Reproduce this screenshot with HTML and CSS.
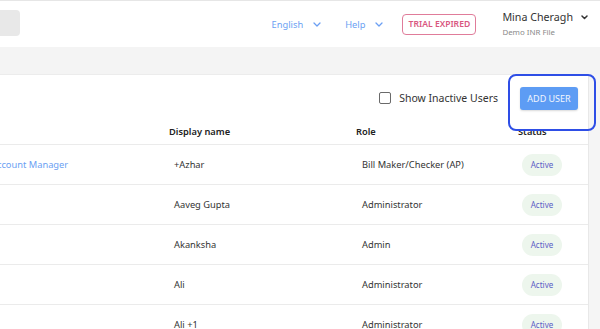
FILE: index.html
```
<!DOCTYPE html>
<html lang="en">
<head>
<meta charset="utf-8">
<title>Users</title>
<link rel="stylesheet" href="styles.css">
</head>
<body>
<header class="topbar">
  <div class="logo-box"></div>
  <nav class="top-nav">
    <a class="nav-link" href="#">English
      <svg class="chev" width="8" height="5" viewBox="0 0 8 5"><polyline points="1,1 4,4 7,1"/></svg>
    </a>
    <a class="nav-link help" href="#">Help
      <svg class="chev" width="8" height="5" viewBox="0 0 8 5"><polyline points="1,1 4,4 7,1"/></svg>
    </a>
    <span class="trial">TRIAL EXPIRED</span>
    <div class="user">
      <div class="user-name">Mina Cheragh
        <svg class="chev dark" width="7" height="5" viewBox="0 0 7 5"><polyline points="1,1 3.5,3.5 6,1"/></svg>
      </div>
      <div class="user-file">Demo INR File</div>
    </div>
  </nav>
</header>
<div class="band"></div>
<main class="content">
  <section class="card">
    <div class="toolbar">
      <label class="check">
        <span class="box"></span>
        <span>Show Inactive Users</span>
      </label>
      <button class="add-btn" type="button">ADD USER</button>
    </div>
    <div class="table">
      <div class="row head">
        <div class="cell c1"></div>
        <div class="cell c2">Display name</div>
        <div class="cell c3">Role</div>
        <div class="cell c4">Status</div>
      </div>
      <div class="row">
        <div class="cell c1"><a class="link" href="#">Account Manager</a></div>
        <div class="cell c2">+Azhar</div>
        <div class="cell c3">Bill Maker/Checker (AP)</div>
        <div class="cell c4"><span class="pill">Active</span></div>
      </div>
      <div class="row">
        <div class="cell c1"></div>
        <div class="cell c2">Aaveg Gupta</div>
        <div class="cell c3">Administrator</div>
        <div class="cell c4"><span class="pill">Active</span></div>
      </div>
      <div class="row">
        <div class="cell c1"></div>
        <div class="cell c2">Akanksha</div>
        <div class="cell c3">Admin</div>
        <div class="cell c4"><span class="pill">Active</span></div>
      </div>
      <div class="row">
        <div class="cell c1"></div>
        <div class="cell c2">Ali</div>
        <div class="cell c3">Administrator</div>
        <div class="cell c4"><span class="pill">Active</span></div>
      </div>
      <div class="row">
        <div class="cell c1"></div>
        <div class="cell c2">Ali +1</div>
        <div class="cell c3">Administrator</div>
        <div class="cell c4"><span class="pill">Active</span></div>
      </div>
    </div>
  </section>
  <div class="gutter"></div>
</main>
</body>
</html>
```
FILE: styles.css
```
* { box-sizing: border-box; }
html, body { margin: 0; padding: 0; }
body {
  width: 600px;
  height: 329px;
  overflow: hidden;
  font-family: "Noto Sans", "Open Sans", sans-serif;
  color: #333;
  background: #f4f4f4;
}
.topbar {
  height: 47px;
  background: #fff;
  border-top: 1px solid #e6e6e6;
  display: flex;
  align-items: center;
  justify-content: space-between;
  padding-right: 12px;
}
.logo-box {
  width: 20px;
  height: 26px;
  margin-top: -2px;
  background: #e8e8e8;
  border-radius: 0 4px 4px 0;
}
.top-nav {
  display: flex;
  align-items: center;
}
.nav-link {
  display: flex;
  align-items: center;
  gap: 10px;
  color: #6b9ff3;
  text-decoration: none;
  font-size: 9.3px;
  margin-right: 24px;
}
.nav-link.help { margin-right: 19px; }
.chev {
  fill: none;
  stroke: #6b9ff3;
  stroke-width: 1.3;
  stroke-linecap: round;
  stroke-linejoin: round;
}
.chev.dark { stroke: #333; stroke-width: 1.5; }
.trial {
  width: 74px;
  height: 21px;
  border: 1px solid #e07c9a;
  border-radius: 4px;
  color: #d9577f;
  font-size: 8.6px;
  font-weight: 600;
  display: flex;
  align-items: center;
  justify-content: center;
  margin-right: 26px;
}
.user {
  display: flex;
  flex-direction: column;
  margin-top: -1px;
}
.user-name {
  display: flex;
  align-items: center;
  gap: 8px;
  font-size: 10.7px;
  color: #333;
  line-height: 15px;
}
.user-file {
  font-size: 7.9px;
  color: #8a8a8a;
  line-height: 12px;
  margin-top: 1px;
}
.band {
  height: 27px;
  background: #f4f4f4;
}
.content {
  display: flex;
}
.card {
  width: 589px;
  background: #fff;
  border-top: 1px solid #ececec;
  border-right: 1px solid #e8e8e8;
}
.gutter {
  flex: 1;
  background: #f5f5f5;
}
.toolbar {
  height: 44px;
  display: flex;
  align-items: center;
  justify-content: flex-end;
  padding-right: 10px;
  padding-top: 2px;
}
.check {
  display: flex;
  align-items: center;
  gap: 8px;
  font-size: 10.5px;
  color: #333;
  margin-right: 22px;
}
.box {
  width: 12px;
  height: 12px;
  margin-left: 1px;
  border: 1.5px solid #6a6a6a;
  border-radius: 2px;
}
.add-btn {
  position: relative;
  width: 58px;
  height: 23px;
  border: none;
  border-radius: 3px;
  background: #5d9cf4;
  color: #f2f6fe;
  font-family: "Noto Sans", sans-serif;
  font-size: 9px;
  padding: 0;
  box-shadow: 0 1px 2px rgba(0,0,0,0.15);
}
.add-btn::after {
  content: "";
  position: absolute;
  left: -12px;
  right: -18px;
  top: -13px;
  bottom: -21px;
  border: 2px solid #2e4ee6;
  border-radius: 8px;
}
.table { display: flex; flex-direction: column; }
.row {
  display: grid;
  grid-template-columns: 169px 187px 162px 1fr;
  height: 40px;
  align-items: center;
  border-bottom: 1px solid #ebebeb;
  font-size: 9.3px;
  color: #333;
}
.row.head {
  height: 26px;
  font-weight: 600;
  color: #222;
}
.row:not(.head) .c2 { padding-left: 5px; }
.row:not(.head) .c3 { padding-left: 6px; }
.row:not(.head) .c4 { padding-left: 4px; }
.c1 { margin-left: -9px; white-space: nowrap; }
.link { color: #6b9ff3; text-decoration: none; }
.pill {
  display: inline-flex;
  align-items: center;
  justify-content: center;
  width: 40px;
  height: 22px;
  border-radius: 11px;
  background: #edf6ed;
  color: #5b60c6;
  font-size: 8px;
}
```
